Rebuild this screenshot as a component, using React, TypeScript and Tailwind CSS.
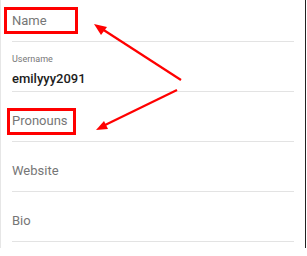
import React from "react";

interface FieldProps {
  label?: string;
  placeholder?: string;
  value?: string;
  highlight?: string;
}

function Field({ label, placeholder, value, highlight = "" }: FieldProps) {
  if (label) {
    return (
      <div className="flex h-[50px] flex-col justify-end border-b border-[#e3e3e3] pb-[4px]">
        <span className="text-[9px] leading-[11px] text-[#777]">{label}</span>
        <span className="mt-[6px] text-[13px] font-medium leading-[16px] text-[#1c1c1c]">
          {value}
        </span>
      </div>
    );
  }
  return (
    <div className="relative flex h-[50px] items-end border-b border-[#e3e3e3] pb-[12px]">
      <span className="text-[13px] leading-[16px] text-[#767676]">{placeholder}</span>
      {highlight && <div className={`absolute border-[3px] border-[#f00] ${highlight}`} />}
    </div>
  );
}

function Arrows() {
  return (
    <svg
      className="pointer-events-none absolute left-0 top-0"
      width="307"
      height="256"
      viewBox="0 0 307 256"
    >
      <line x1="181" y1="80" x2="99" y2="27" stroke="#f00" strokeWidth="2.2" />
      <path d="M94 24 L107 27 L101 35 Z" fill="#f00" />
      <line x1="177" y1="90" x2="101" y2="127" stroke="#f00" strokeWidth="2.2" />
      <path d="M96 130 L104 121 L108 129 Z" fill="#f00" />
    </svg>
  );
}

export default function App() {
  return (
    <div
      className="relative h-[256px] w-[307px] overflow-hidden bg-white"
      style={{ fontFamily: "Roboto, 'Liberation Sans', sans-serif" }}
    >
      <div className="h-full w-[306px] border-l border-r border-l-[#e6e6e6] border-r-[#222] pl-[11px] pr-[11px]">
        <div className="-mt-[8px] flex flex-col">
          <Field placeholder="Name" highlight="left-[-8px] top-[15px] h-[27px] w-[74px]" />
          <Field label="Username" value="emilyyy2091" />
          <Field placeholder="Pronouns" highlight="left-[-5px] top-[16px] h-[27px] w-[69px]" />
          <Field placeholder="Website" />
          <Field placeholder="Bio" />
        </div>
      </div>
      <Arrows />
    </div>
  );
}
